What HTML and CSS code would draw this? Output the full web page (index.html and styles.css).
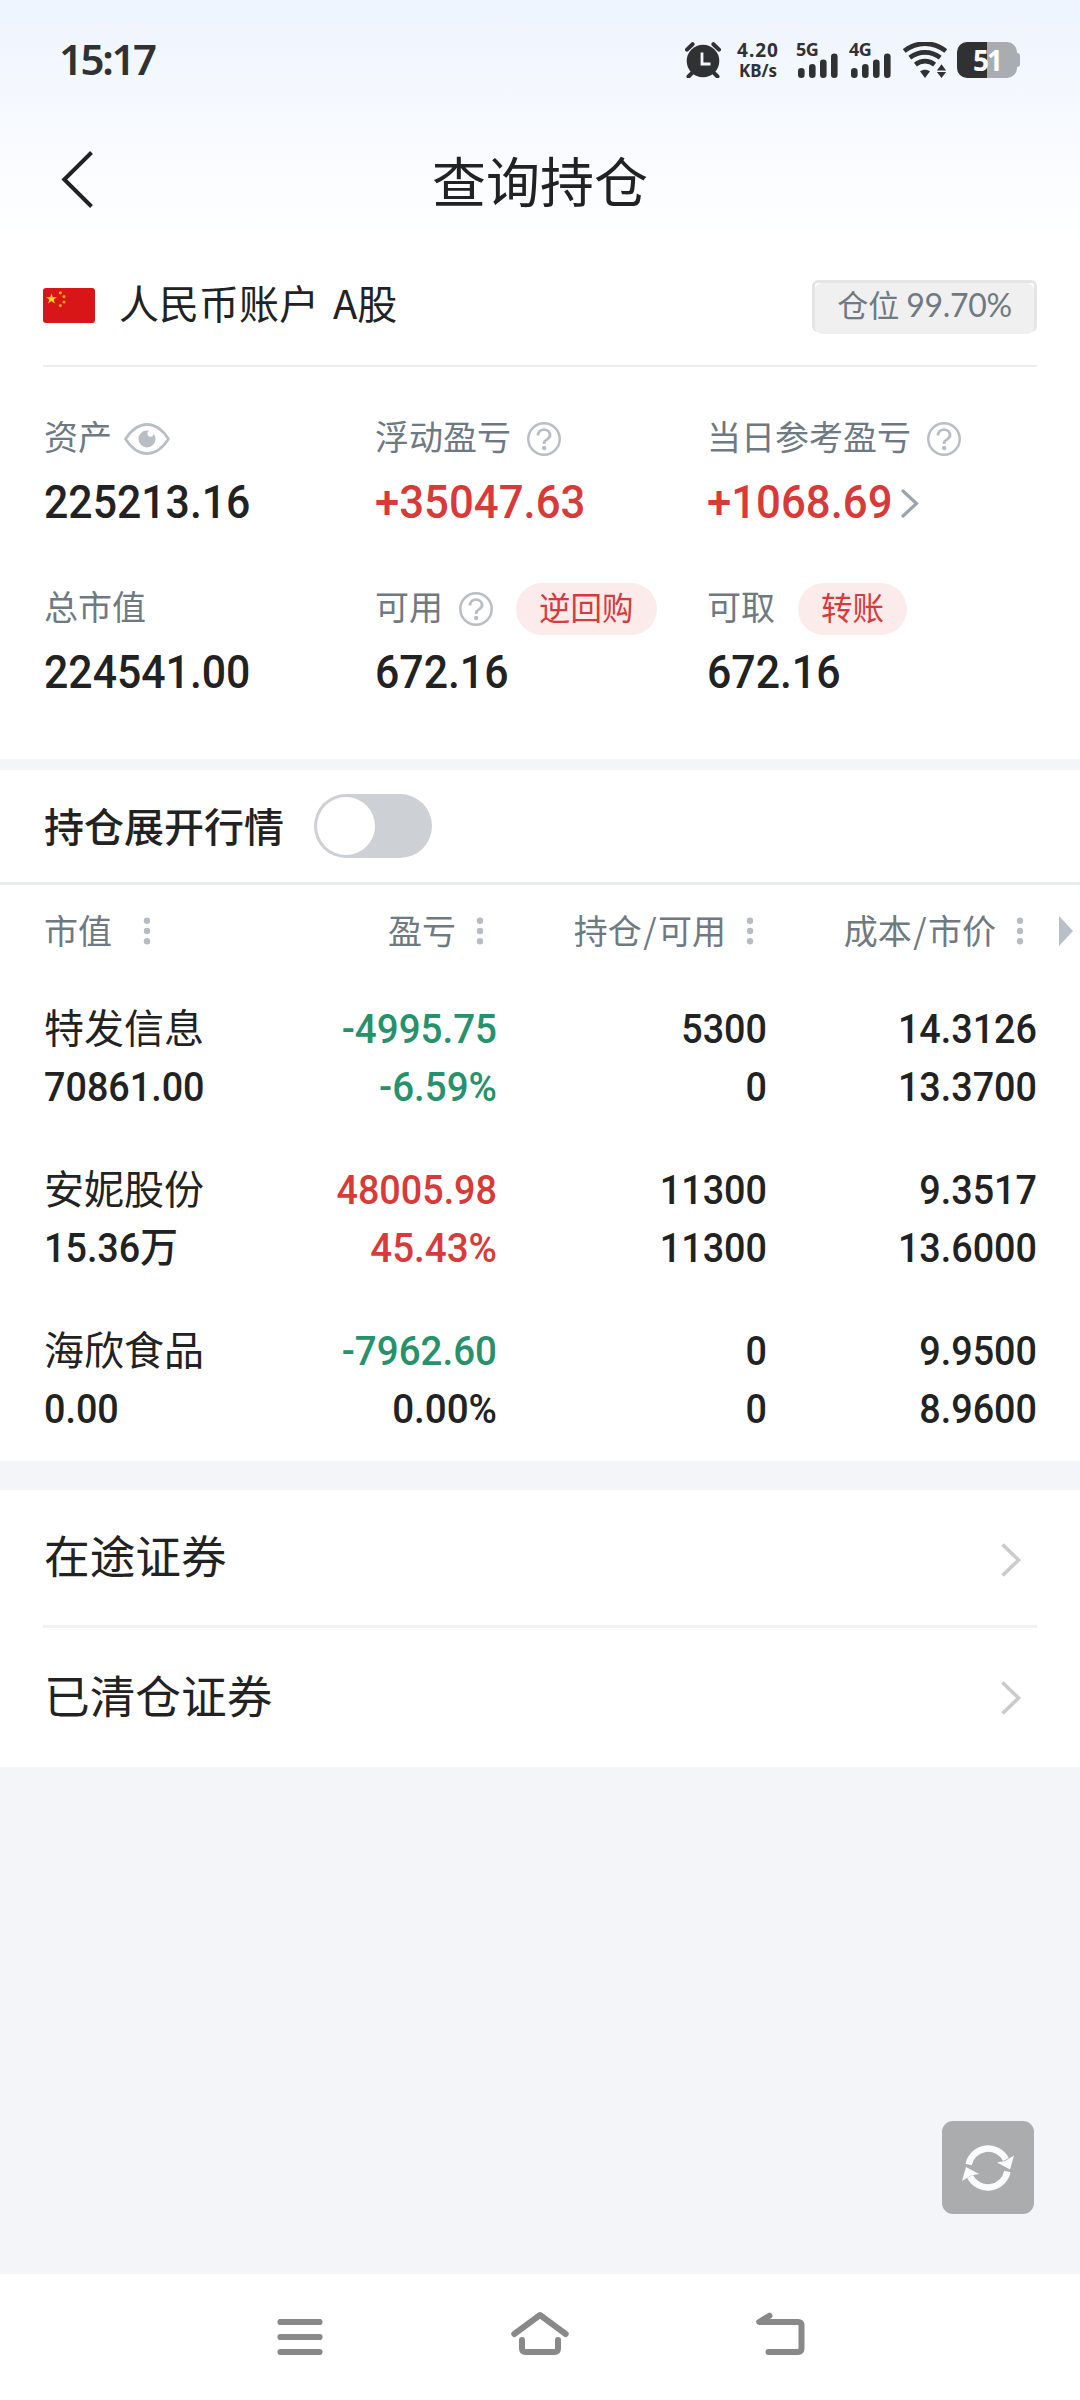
FILE: index.html
```html
<!DOCTYPE html>
<html lang="zh-CN">
<head>
<meta charset="utf-8">
<title>查询持仓</title>
<link rel="stylesheet" href="styles.css">
</head>
<body>
<svg class="defs" width="0" height="0">
  <symbol id="help" viewBox="0 0 34 34">
    <circle cx="17" cy="17" r="15.7" fill="none" stroke="#b9bec4" stroke-width="2.5"/>
    <path d="M11 13.6c0-3.600 2.600-6 6-6s6 2.400 6 5.600c0 4.200-5.800 4-5.800 7.800v1" fill="none" stroke="#b9bec4" stroke-width="2.800"/>
    <circle cx="17.200" cy="26" r="2.200" fill="#b9bec4"/>
  </symbol>
  <symbol id="dots" viewBox="0 0 8 28">
    <circle cx="4" cy="3.700" r="3.200" fill="#b6bcc2"/><circle cx="4" cy="14" r="3.200" fill="#b6bcc2"/><circle cx="4" cy="24.300" r="3.200" fill="#b6bcc2"/>
  </symbol>
  <symbol id="bars" viewBox="0 0 40 25">
    <path d="M3.300 18.300v3.400M14.300 14.300v7.400M25.300 9.800v11.900M36.300 3.800v17.900" stroke="#303132" stroke-width="6.600" stroke-linecap="round" fill="none"/>
  </symbol>
</svg>
<div class="screen">
  <div class="top">
    <div class="status">
      <div class="clock">15:17</div>
      <div class="status-icons">
        <svg class="alarm" width="36" height="36" viewBox="0 0 36 36">
          <circle cx="18" cy="19" r="16.300" fill="#303132"/>
          <path d="M2 7.600 7.600 2.200M34 7.600 28.400 2.200" stroke="#303132" stroke-width="4" stroke-linecap="round"/>
          <path d="M7 31 3.500 34.500M29 31l3.500 3.500" stroke="#303132" stroke-width="4" stroke-linecap="round"/>
          <path d="M17 10.500V22h8.500" fill="none" stroke="#f3f7fe" stroke-width="2.800"/>
        </svg>
        <div class="speed"><span>4.20</span><span class="unit">KB/s</span></div>
        <div class="signal"><span>5G</span><svg width="40" height="25"><use href="#bars"/></svg></div>
        <div class="signal"><span>4G</span><svg width="40" height="25"><use href="#bars"/></svg></div>
        <svg class="wifi" width="44" height="36" viewBox="0 0 44 36">
          <g fill="none" stroke="#303132" stroke-width="4.600">
            <path d="M1.200 9C14 -.9 30 -.9 42.800 9"/>
            <path d="M6.800 15.600C16 8.600 28 8.600 37.200 15.600"/>
            <path d="M12.400 22.600C18 18 26 18 31.600 22.600"/>
          </g>
          <path d="M17 29.300c3-2.200 7-2.200 10 0L22 36z" fill="#303132"/>
          <path d="M38.500 22.200l4.600 6.200h-9.200zM38.500 36l4.600-6h-9.200z" fill="#303132"/>
        </svg>
        <div class="battery">
          <div class="cell"><span>51</span></div><i></i>
        </div>
      </div>
    </div>
    <div class="titlebar">
      <svg width="34" height="60" viewBox="0 0 34 60"><path d="M31.500 2.500 4.300 29.500l27.200 27" fill="none" stroke="#222" stroke-width="4"/></svg>
      <h1>查询持仓</h1>
    </div>
    <div class="account">
      <svg class="flag" width="52" height="35" viewBox="0 0 52 35">
        <rect width="52" height="35" rx="3" fill="#d81618"/>
        <path d="M8.500 5.200l1.300 4h4.200l-3.400 2.400 1.300 4-3.400-2.500-3.400 2.500 1.300-4L3 9.200h4.200z" fill="#fcd21c"/>
        <g fill="#f2a01c"><circle cx="17.300" cy="4.800" r="1.600"/><circle cx="21" cy="8.600" r="1.600"/><circle cx="21" cy="14" r="1.600"/><circle cx="17.300" cy="17.600" r="1.600"/></g>
      </svg>
      <span class="account-name">人民币账户 A股</span>
      <span class="ratio"><span class="ratio-in">仓位 <b>99.70%</b></span></span>
    </div>
    <div class="stats">
      <div class="stat">
        <div class="label"><span class="text">资产</span>
          <svg class="eye" width="46" height="32" viewBox="0 0 46 32"><path d="M1.500 16C8 6 15 1.400 23 1.400S38 6 44.500 16C38 26 31 30.600 23 30.600S8 26 1.500 16z" fill="none" stroke="#b9bec4" stroke-width="2.600"/><circle cx="23" cy="16" r="8.500" fill="#b9bec4"/><circle cx="26.500" cy="10.800" r="3" fill="#fff"/></svg>
        </div>
        <div class="value"><span class="num">225213.16</span></div>
      </div>
      <div class="stat">
        <div class="label"><span class="text">浮动盈亏</span><svg class="help" width="34" height="34"><use href="#help"/></svg></div>
        <div class="value up"><span class="num signed">+35047.63</span></div>
      </div>
      <div class="stat">
        <div class="label"><span class="text">当日参考盈亏</span><svg class="help" width="34" height="34"><use href="#help"/></svg></div>
        <div class="value up"><span class="num signed">+1068.69</span><svg class="go" width="18" height="29" viewBox="0 0 18 29"><path d="M2 2l13.500 12.500L2 27" fill="none" stroke="#9ba3ab" stroke-width="3.200" stroke-linecap="round"/></svg></div>
      </div>
      <div class="stat">
        <div class="label"><span class="text">总市值</span></div>
        <div class="value"><span class="num">224541.00</span></div>
      </div>
      <div class="stat">
        <div class="label"><span class="text">可用</span><svg class="help" width="34" height="34"><use href="#help"/></svg><span class="pill">逆回购</span></div>
        <div class="value"><span class="num">672.16</span></div>
      </div>
      <div class="stat">
        <div class="label"><span class="text">可取</span><span class="pill">转账</span></div>
        <div class="value"><span class="num">672.16</span></div>
      </div>
    </div>
  </div>

  <div class="expand"><span class="text">持仓展开行情</span><div class="toggle"><i></i></div></div>

  <div class="table">
    <div class="row head">
      <div class="first"><span class="text">市值</span><svg width="8" height="28"><use href="#dots"/></svg></div>
      <div><span class="text">盈亏</span><svg width="8" height="28"><use href="#dots"/></svg></div>
      <div><span class="text">持仓<span class="slash">/</span>可用</span><svg width="8" height="28"><use href="#dots"/></svg></div>
      <div><span class="text">成本<span class="slash">/</span>市价</span><svg width="8" height="28"><use href="#dots"/></svg></div>
      <svg class="more" width="14" height="30" viewBox="0 0 14 30"><path d="M0 0l14 15L0 30z" fill="#b9bfc7"/></svg>
    </div>
    <div class="row">
      <div class="first"><span class="name">特发信息</span><span class="num">70861.00</span></div>
      <div class="down"><span class="num signed">-4995.75</span><span class="num signed">-6.59%</span></div>
      <div><span class="num">5300</span><span class="num">0</span></div>
      <div><span class="num">14.3126</span><span class="num">13.3700</span></div>
    </div>
    <div class="row">
      <div class="first"><span class="name">安妮股份</span><span class="num">15.36万</span></div>
      <div class="up"><span class="num">48005.98</span><span class="num signed">45.43%</span></div>
      <div><span class="num">11300</span><span class="num">11300</span></div>
      <div><span class="num">9.3517</span><span class="num">13.6000</span></div>
    </div>
    <div class="row">
      <div class="first"><span class="name">海欣食品</span><span class="num">0.00</span></div>
      <div><span class="num signed down">-7962.60</span><span class="num signed">0.00%</span></div>
      <div><span class="num">0</span><span class="num">0</span></div>
      <div><span class="num">9.9500</span><span class="num">8.9600</span></div>
    </div>
  </div>

  <div class="links">
    <div class="link"><span>在途证券</span><svg width="22" height="36" viewBox="0 0 22 36"><path d="M2.500 2.500 18.500 18l-16 15.500" fill="none" stroke="#cbcbcb" stroke-width="3.600"/></svg></div>
    <div class="link"><span>已清仓证券</span><svg width="22" height="36" viewBox="0 0 22 36"><path d="M2.500 2.500 18.500 18l-16 15.500" fill="none" stroke="#cbcbcb" stroke-width="3.600"/></svg></div>
  </div>

  <div class="nav">
    <svg width="46" height="36" viewBox="0 0 46 36"><path d="M3.500 3h39M3.500 18h39M3.500 33h39" stroke="#898989" stroke-width="6.200" stroke-linecap="round"/></svg>
    <svg width="58" height="44" viewBox="0 0 58 44"><g fill="none" stroke="#898989" stroke-width="6" stroke-linecap="round" stroke-linejoin="round"><path d="M3.300 23 29 4l25.700 19"/><path d="M11 29v8.500q0 3.500 3.500 3.500h29q3.500 0 3.500-3.500V29"/></g></svg>
    <svg width="49" height="43" viewBox="0 0 49 43"><g fill="none" stroke="#898989" stroke-width="6" stroke-linecap="round" stroke-linejoin="round"><path d="M13.500 3.700 3.200 10H42q3.500 0 3.500 3.500v23q0 3.500-3.500 3.500H12.500"/></g></svg>
  </div>

  <div class="refresh">
    <svg width="52" height="48" viewBox="0 0 52 48"><g fill="none" stroke="#fafbfc" stroke-width="6.400"><path d="M6.600 20.500A20 20 0 0 1 44 15.500"/><path d="M45.400 27.500A20 20 0 0 1 8 32.500"/></g><path d="M52 11.500 48 25.500 35 18.500l8-1.500zM0 37l4-14 13 7-8 1.500z" fill="#fafbfc"/></svg>
  </div>
</div>
</body>
</html>
```
FILE: styles.css
```css
* { box-sizing: border-box; }
body {
  margin: 0;
  background: #f4f5f9;
  color: #222;
  font-family: "Noto Sans CJK SC", sans-serif;
}
svg { display: block; flex: none; }
.defs { position: absolute; }
.screen {
  position: relative;
  display: flex;
  flex-direction: column;
  width: 1080px;
  height: 2400px;
  overflow: hidden;
}

/* header and account summary */
.top {
  height: 759px;
  background: linear-gradient(#eef4fe 0, #fff 240px);
}
.status {
  display: flex;
  justify-content: space-between;
  align-items: center;
  height: 120px;
  padding: 0 60px 0 59px;
  color: #303132;
}
.clock {
  padding-bottom: 2px;
  font: 600 42px/58px "Noto Sans", sans-serif;
  letter-spacing: -2.4px;
}
.status-icons { display: flex; height: 36px; }
.speed {
  display: flex;
  flex-direction: column;
  width: 50px;
  margin-left: 12px;
  font: 700 19px/17px "Noto Sans", sans-serif;
  text-align: center;
  letter-spacing: 1px;
}
.speed .unit { font-size: 17px; line-height: 23px; letter-spacing: 0; }
.signal {
  width: 42px;
  margin-left: 13px;
  font: 700 18px/14px "Noto Sans", sans-serif;
  letter-spacing: -.5px;
}
.signal + .signal { margin-left: 11px; }
.signal span { display: block; height: 11px; }
.signal svg { margin-left: 2px; }
.wifi { margin-left: 12px; }
.battery { display: flex; align-items: center; margin-left: 10px; }
.cell {
  width: 60px;
  height: 36px;
  border-radius: 10px;
  background: linear-gradient(90deg, #303132 50%, #a9acb0 50%);
  color: #fff;
  font: 700 28px/36px "Noto Sans", sans-serif;
  letter-spacing: -2px;
  text-align: center;
}
.battery i { width: 3px; height: 14px; border-radius: 0 3px 3px 0; background: #a9acb0; }
.titlebar {
  display: flex;
  align-items: center;
  height: 120px;
  padding: 0 60px;
}
.titlebar h1 {
  flex: 1;
  margin: 0 34px 0 0;
  font-size: 54px;
  font-weight: 400;
  line-height: 80px;
  text-align: center;
}
.account {
  display: flex;
  align-items: center;
  height: 127px;
  margin: 0 43px;
  border-bottom: 2px solid #ededed;
}
.flag { margin-top: 5px; }
.account-name {
  margin-left: 24px;
  padding-bottom: 2px;
  font-size: 40px;
  line-height: 60px;
  word-spacing: 5px;
}
.ratio {
  width: 225px;
  height: 52px;
  margin: 7px 0 0 auto;
  border: 3px solid #e5e5e5;
  border-bottom: 0;
  border-radius: 6px;
}
.ratio-in {
  display: block;
  height: 51px;
  border-radius: 7px;
  background: #f0f0f0;
  color: #6f7982;
  font-size: 31px;
  line-height: 41px;
  text-align: center;
  white-space: nowrap;
}
.ratio b { font: 400 32px/41px Lato, sans-serif; letter-spacing: -.3px; }
.stats {
  display: grid;
  grid-template-columns: 331px 332px 1fr;
  grid-auto-rows: 170px;
  padding: 46px 0 0 44px;
}
.label {
  display: flex;
  align-items: center;
  height: 52px;
  color: #6f7982;
  font-size: 34px;
}
.text { margin-bottom: 3px; }
.label .text { margin-bottom: 7px; }
.eye { margin-left: 12px; }
.help { margin-left: 16px; }
.pill {
  height: 52px;
  margin-left: 23px;
  padding: 0 23px;
  border-radius: 26px;
  background: #fcebeb;
  color: #d63b3b;
  font-size: 31.500px;
  line-height: 47px;
}
.value { display: flex; align-items: center; height: 74px; }
.num {
  display: block;
  transform: scaleX(.92);
  transform-origin: left;
  font-family: Roboto, "Noto Sans CJK SC", sans-serif;
  font-weight: 500;
  white-space: nowrap;
}
.num.signed { transform: scaleX(.94); }
.value .num { font-size: 46.500px; }
.go { margin: 3px 0 0 -3px; }
.up { color: #d83a3a; }
.down { color: #26916a; }

/* quote toggle */
.expand {
  display: flex;
  align-items: center;
  height: 126px;
  border-top: 11px solid #f4f5f9;
  border-bottom: 3px solid #ebecee;
  padding-left: 44px;
  background: #fff;
  font-size: 40px;
  font-weight: 500;
}
.toggle {
  width: 118px;
  height: 64px;
  margin-left: 30px;
  padding: 3px;
  border-radius: 32px;
  background: #cdd0d5;
}
.toggle i { display: block; width: 58px; height: 58px; border-radius: 50%; background: #fff; }

/* holdings */
.table { height: 576px; background: #fff; }
.row {
  display: grid;
  grid-template-columns: 183px 270px 270px 270px 1fr;
  height: 161px;
  padding-left: 44px;
  text-align: right;
  line-height: 58px;
  font-size: 41px;
}
.row .num { transform-origin: right; }
.row .first .num { transform-origin: left; }
.name { display: block; height: 58px; font-size: 40px; line-height: 53px; }
.head {
  height: 115px;
  color: #6f7982;
  font-size: 34px;
  line-height: 89px;
}
.head div { display: flex; align-items: center; justify-content: flex-end; gap: 20px; height: 92px; padding-right: 13px; }
.slash { margin: 0 1.500px; }
.first { text-align: left; }
.head .first { justify-content: flex-start; gap: 31px; }
.more { margin: 31px 0 0 22px; }

/* link list */
.links { margin-top: 29px; padding: 0 43px; background: #fff; }
.link {
  display: flex;
  align-items: center;
  justify-content: space-between;
  height: 135px;
  padding: 0 15px 0 1px;
  font-size: 45.700px;
}
.link span { padding-bottom: 7px; }
.link svg { margin-top: 4px; }
.link + .link { height: 142px; border-top: 3px solid #f2f2f2; }
.link + .link svg { margin-top: 1px; }

.nav {
  display: flex;
  justify-content: space-between;
  align-items: flex-end;
  height: 126px;
  margin-top: auto;
  padding: 0 275px 45px 277px;
  background: #fff;
}
.refresh {
  position: absolute;
  left: 942px;
  top: 2121px;
  display: flex;
  align-items: center;
  justify-content: center;
  width: 92px;
  height: 93px;
  border-radius: 11px;
  background: #abacae;
}
```
